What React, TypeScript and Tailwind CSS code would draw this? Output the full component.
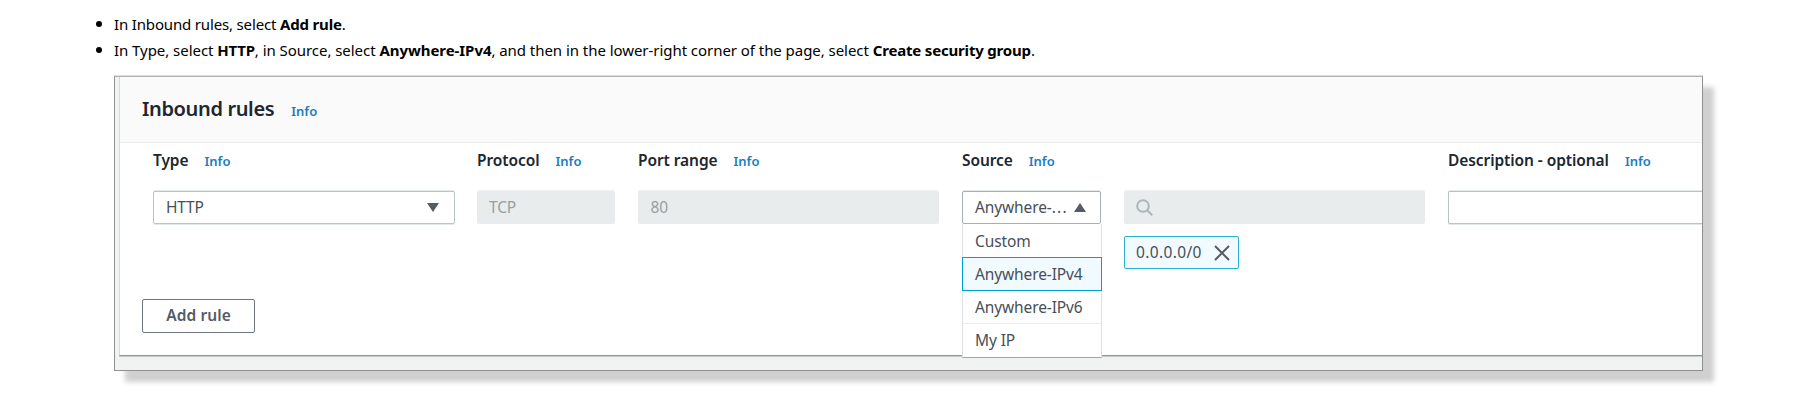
import React from "react";

const ui = "font-['Noto_Sans',sans-serif]";

function Info() {
  return <span className="text-[13px] font-semibold tracking-normal text-[#1a7cc4]">Info</span>;
}

function Label({ text }: { text: string }) {
  return (
    <div className="flex h-5 shrink-0 items-baseline gap-4 text-[15.5px] leading-5 font-semibold tracking-[-0.08px] whitespace-nowrap text-[#20262e]">
      <span>{text}</span>
      <Info />
    </div>
  );
}

export default function App() {
  return (
    <main className={`h-[400px] w-[1818px] overflow-hidden bg-white ${ui}`}>
      <ul className="flex h-[76px] flex-col pt-[11px] pl-[96px] text-[15px] leading-[26px] whitespace-nowrap text-black">
        <li className="flex items-center gap-[12px]">
          <span className="size-[6px] rounded-full bg-black" />
          <span className="tracking-[-0.16px]">In Inbound rules, select <b>Add rule</b>.</span>
        </li>
        <li className="flex items-center gap-[12px]">
          <span className="size-[6px] rounded-full bg-black" />
          <span className="tracking-[-0.05px]">
            In Type, select <b className="tracking-[-0.2px]">HTTP</b>, in Source, select <b>Anywhere-IPv4</b>, and then in the lower-right corner of
            the page, select <b className="tracking-[-0.18px]">Create security group</b>.
          </span>
        </li>
      </ul>

      <section className="ml-[114px] flex h-[295px] w-[1589px] flex-col border border-[#8f9191] border-t-[#b0b3b3] bg-[#f1f3f3] pl-1 shadow-[0_-1px_0_#dcdede,11px_11px_5px_#d0d0d0]">
        <div className="flex h-[279px] shrink-0 flex-col border-b border-l border-b-[#8c9899] border-l-[#d5dbdb] bg-white shadow-[0_1px_0_#c5cccc]">
          <header className="flex h-[66px] shrink-0 items-baseline gap-[17px] border-b border-[#eaeded] bg-[#fafafa] pt-[18px] pl-[22px]">
            <h2 className="text-[20px] leading-7 font-semibold tracking-[-0.36px] text-[#20262e]">Inbound rules</h2>
            <Info />
          </header>

          <div className="flex gap-[23px] pt-[7px] pl-[33px] text-[15.5px] tracking-[-0.12px] text-[#484f58]">
            <div className="flex w-[302px] shrink-0 flex-col gap-[21px]">
              <Label text="Type" />
              <div className="flex h-[33px] items-center justify-between rounded-[2px] border border-[#b9c4c4] pr-[15px] pl-[12px] shadow-[0_1px_0_#e3e8e8,0_-1px_0_#e3e8e8]">
                <span className="tracking-[-0.2px]">HTTP</span>
                <svg className="h-[9px] w-3" viewBox="0 0 12 9"><path d="M0 0h12L6 9z" fill="#545b64" /></svg>
              </div>
            </div>
            <div className="-ml-px flex w-[138px] shrink-0 flex-col gap-[21px]">
              <Label text="Protocol" />
              <div className="flex h-[33px] items-center rounded-[2px] bg-[#e9ecec] pl-3 text-[#95a0a2] shadow-[0_-1px_0_#f1f3f3]">TCP</div>
            </div>
            <div className="flex w-[301px] shrink-0 flex-col gap-[21px]">
              <Label text="Port range" />
              <div className="flex h-[33px] items-center rounded-[2px] bg-[#e9ecec] pl-[12.5px] text-[#95a0a2] shadow-[0_-1px_0_#f1f3f3]">80</div>
            </div>
            <div className="relative flex w-[139px] shrink-0 flex-col gap-[21px]">
              <Label text="Source" />
              <div className="flex h-[33px] items-center justify-between rounded-[2px] border border-[#a4b0b1] pr-[14px] pl-3 shadow-[0_-1px_0_#e3e8e8]">
                <span>Anywhere-<span className="tracking-[1.3px]">...</span></span>
                <svg className="h-[9px] w-3" viewBox="0 0 12 9"><path d="M0 9h12L6 0z" fill="#545b64" /></svg>
              </div>
              <ul className="absolute top-[74px] left-0 flex h-[134px] w-[140px] flex-col border border-t-0 border-[#dfe3e3] border-b-[#9ba6a7] bg-white">
                <li className="flex h-[33px] items-center pt-[2px] pl-3">Custom</li>
                <li className="-mx-px flex h-[34px] items-center border border-[#00a1c9] bg-[#f1faff] pt-px pl-3">Anywhere-IPv4</li>
                <li className="flex h-[33px] items-center border-b border-[#eaeded] pt-px pl-3">Anywhere-IPv6</li>
                <li className="flex h-[33px] items-center pt-px pl-3">My IP</li>
              </ul>
            </div>
            <div className="flex w-[301px] shrink-0 flex-col pt-[41px]">
              <div className="flex h-[33px] items-center rounded-[2px] bg-[#e9ecec] pl-3 shadow-[0_-1px_0_#f1f3f3]">
                <svg className="size-[17px]" viewBox="0 0 17 17" fill="none" stroke="#aab7b8" strokeWidth="2"><circle cx="7" cy="7" r="5.8" /><path d="M11.2 11.2l5 5" /></svg>
              </div>
              <div className="mt-[12px] flex h-[33px] w-[115px] items-center justify-between rounded-[2px] border border-[#2bb0d0] bg-[#f1faff] pr-[8px] pl-[11px]">
                <span className="tracking-[0.35px]">0.0.0.0/0</span>
                <svg className="size-4" viewBox="0 0 16 16" stroke="#545b64" strokeWidth="2"><path d="M1 1l14 14M15 1L1 15" /></svg>
              </div>
            </div>
            <div className="flex w-[254px] shrink-0 flex-col gap-[21px]">
              <Label text="Description - optional" />
              <div className="h-[33px] rounded-l-[2px] border border-r-0 border-[#b9c4c4] shadow-[0_1px_0_#e3e8e8,0_-1px_0_#e3e8e8]" />
            </div>
          </div>

          <button className="mt-[30px] ml-[22px] flex h-[34px] w-[113px] items-center justify-center rounded-[2px] border border-[#6d747b] text-[15.5px] font-semibold tracking-[0.1px] text-[#545b64]">
            Add rule
          </button>
        </div>
      </section>
    </main>
  );
}
